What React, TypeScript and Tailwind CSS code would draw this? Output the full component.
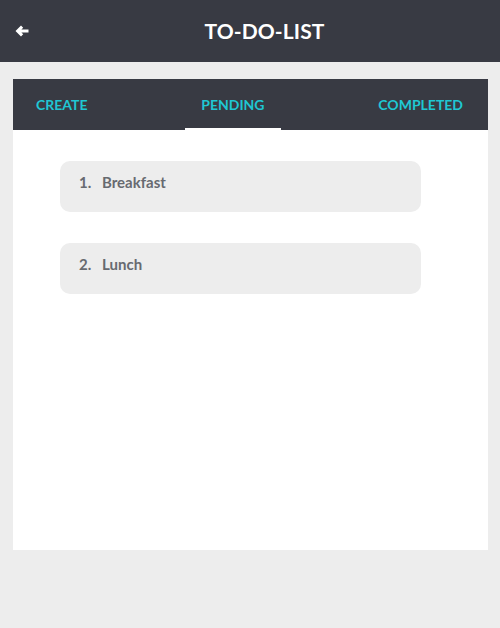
import React from "react";

export default function App() {
  const items = ["Breakfast", "Lunch"];
  return (
    <div className="w-[500px] h-[628px] bg-[#ededed] flex flex-col" style={{ fontFamily: "Lato, 'Open Sans', sans-serif" }}>
      <div className="h-[62px] bg-[#383a43] flex items-center shrink-0">
        <div className="pl-[15px] flex items-center text-white">
          <svg width="14" height="14" viewBox="0 0 14 14" fill="white">
            <path d="M0.5 7 L6 1.5 L8.2 3.7 L6.4 5.5 H13.5 V8.5 H6.4 L8.2 10.3 L6 12.5 Z" />
          </svg>
        </div>
        <div className="flex-1 text-center text-white font-bold text-[21px] tracking-[0.1px]">TO-DO-LIST</div>
      </div>
      <div className="ml-[13px] mr-[12px] mt-[17px] h-[471px] bg-white flex flex-col">
        <div className="h-[51px] bg-[#383a43] flex justify-between items-stretch pl-[8px] pr-[10px] shrink-0">
          {["CREATE", "PENDING", "COMPLETED"].map((t, i) => (
            <div key={t} className={"relative flex items-center text-[#1fc7d3] font-bold text-[14px] -mt-[1px] " + (i === 1 ? "px-[16px]" : "px-[15px]")}>
              {t}
              {i === 1 && <div className="absolute left-0 right-0 -bottom-[1px] h-[3px] bg-white" />}
            </div>
          ))}
        </div>
        <div className="flex flex-col gap-[31px] pt-[31px] pl-[47px] pr-[67px]">
          {items.map((it, i) => (
            <div key={it} className="h-[51px] bg-[#ededed] rounded-[10px] pl-[19px] pt-[10px] text-[#676a70] font-bold text-[15px]">
              <span className="inline-block w-[23px]">{i + 1}.</span>{it}
            </div>
          ))}
        </div>
      </div>
    </div>
  );
}
